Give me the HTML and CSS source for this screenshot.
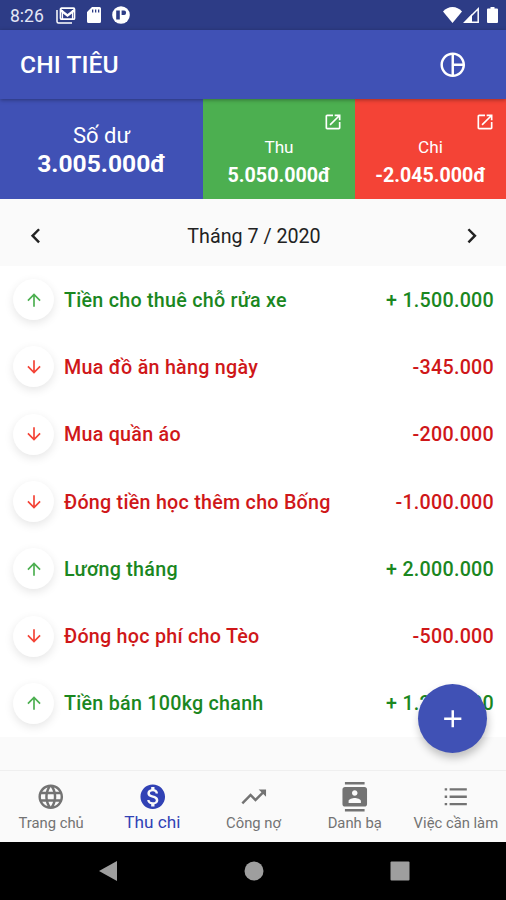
FILE: index.html
```html
<!DOCTYPE html>
<html lang="vi">
<head>
<meta charset="utf-8">
<title>Chi tiêu</title>
<link rel="stylesheet" href="styles.css">
</head>
<body>
<svg class="defs" width="0" height="0">
  <symbol id="up" viewBox="0 0 24 24"><path d="M4 12l1.41 1.41L11 7.83V20h2V7.83l5.58 5.59L20 12l-8-8-8 8z"/></symbol>
  <symbol id="down" viewBox="0 0 24 24"><path d="M20 12l-1.41-1.41L13 16.17V4h-2v12.17l-5.58-5.59L4 12l8 8 8-8z"/></symbol>
  <symbol id="open" viewBox="0 0 24 24"><path d="M19 19H5V5h7V3H5c-1.11 0-2 .9-2 2v14c0 1.1.89 2 2 2h14c1.1 0 2-.9 2-2v-7h-2v7zM14 3v2h3.59l-9.83 9.83 1.41 1.41L19 6.41V10h2V3h-7z"/></symbol>
</svg>
<div class="screen">
  <header class="status">
    <span class="clock">8:26</span>
    <svg class="s-mail" viewBox="0 0 20 17"><path d="M1 3v11.5Q1 16 2.500 16H16" fill="none" stroke="#fff" stroke-width="1.500"/><rect x="4.500" y="1.200" width="14" height="11" rx="1" fill="none" stroke="#fff" stroke-width="1.700"/><path d="M5 2l6.500 5L18 2v3l-6.500 5L5 5z"/><path d="M6.500 3v9M16.500 3v9" stroke="#fff" stroke-width="1.200"/></svg>
    <svg class="s-sd" viewBox="0 0 14 16"><path fill-rule="evenodd" d="M5 0h7.500Q14 0 14 1.500v13q0 1.500-1.500 1.500h-11Q0 16 0 14.500V5zM5 2.500v3h1.300v-3zM8 2.500v3h1.300v-3zM11 2.500v3h1.300v-3z"/></svg>
    <svg class="s-app" viewBox="0 0 18 18"><circle cx="9" cy="9" r="8.800"/><path d="M4.200 4.500h3.600v9H4.200zM9.600 4.500h2.500q2 0 2 2.300t-2 2.300H9.600z" fill="#2d3c86"/></svg>
    <span class="grow"></span>
    <svg class="s-wifi" viewBox="0 0 19 16"><path d="M9.500 16L0 4.500Q4 0 9.500 0T19 4.500z"/></svg>
    <svg class="s-signal" viewBox="0 0 16 16"><path d="M1.800 15.200L15.200 1.800V15.200z" fill="none" stroke="#fff" stroke-width="1.500"/><path d="M1 15.500L9 7v8.500z"/></svg>
    <svg class="s-battery" viewBox="0 0 11 16"><path d="M3.500 0h4v1.500H10q1 0 1 1V15q0 1-1 1H1q-1 0-1-1V2.500q0-1 1-1h2.500z"/></svg>
  </header>
  <div class="appbar">
    <h1>CHI TIÊU</h1>
    <svg class="icon" viewBox="0 0 24 24"><path d="M12 2C6.480 2 2 6.480 2 12s4.480 10 10 10 10-4.480 10-10S17.520 2 12 2zm1 2.070c3.610.45 6.480 3.330 6.930 6.930H13V4.070zM4 12c0-4.060 3.070-7.440 7-7.930v15.870c-3.930-.5-7-3.880-7-7.940zm9 7.930V13h6.930c-.45 3.610-3.320 6.480-6.930 6.930z"/></svg>
  </div>
  <section class="summary">
    <div class="tile balance"><span>Số dư</span><b>3.005.000đ</b></div>
    <div class="tile income"><svg><use href="#open"/></svg><span>Thu</span><b>5.050.000đ</b></div>
    <div class="tile expense"><svg><use href="#open"/></svg><span>Chi</span><b>-2.045.000đ</b></div>
  </section>
  <div class="month">
    <svg class="icon" viewBox="0 0 24 24"><path d="M15.410 7.410L14 6l-6 6 6 6 1.410-1.410L10.830 12z"/></svg>
    <span>Tháng 7 / 2020</span>
    <svg class="icon" viewBox="0 0 24 24"><path d="M10 6L8.590 7.410 13.170 12l-4.580 4.590L10 18l6-6z"/></svg>
  </div>
  <main>
    <ul class="list">
      <li class="in"><i><svg><use href="#up"/></svg></i><span>Tiền cho thuê chỗ rửa xe</span><em>+ 1.500.000</em></li>
      <li class="out"><i><svg><use href="#down"/></svg></i><span>Mua đồ ăn hàng ngày</span><em>-345.000</em></li>
      <li class="out"><i><svg><use href="#down"/></svg></i><span>Mua quần áo</span><em>-200.000</em></li>
      <li class="out"><i><svg><use href="#down"/></svg></i><span>Đóng tiền học thêm cho Bống</span><em>-1.000.000</em></li>
      <li class="in"><i><svg><use href="#up"/></svg></i><span>Lương tháng</span><em>+ 2.000.000</em></li>
      <li class="out"><i><svg><use href="#down"/></svg></i><span>Đóng học phí cho Tèo</span><em>-500.000</em></li>
      <li class="in"><i><svg><use href="#up"/></svg></i><span>Tiền bán 100kg chanh</span><em>+ 1.200.000</em></li>
    </ul>
    <button class="fab" aria-label="Thêm"><svg class="icon" viewBox="0 0 24 24"><path d="M19 13h-6v6h-2v-6H5v-2h6V5h2v6h6v2z"/></svg></button>
  </main>
  <nav class="tabs">
    <a><svg class="icon" viewBox="0 0 24 24"><path d="M11.990 2C6.470 2 2 6.480 2 12s4.470 10 9.990 10C17.520 22 22 17.520 22 12S17.520 2 11.990 2zm6.930 6h-2.950c-.32-1.250-.78-2.450-1.380-3.560 1.840.63 3.370 1.910 4.330 3.560zM12 4.040c.83 1.200 1.480 2.530 1.910 3.960h-3.820c.43-1.430 1.080-2.760 1.910-3.960zM4.260 14C4.100 13.360 4 12.690 4 12s.1-1.360.26-2h3.380c-.08.66-.14 1.320-.14 2 0 .68.06 1.340.14 2H4.260zm.82 2h2.950c.32 1.250.78 2.450 1.380 3.560-1.840-.63-3.370-1.900-4.330-3.560zm2.950-8H5.080c.96-1.660 2.490-2.930 4.330-3.560C8.810 5.550 8.350 6.750 8.030 8zM12 19.960c-.83-1.200-1.480-2.530-1.910-3.960h3.820c-.43 1.430-1.080 2.760-1.910 3.960zM14.340 14H9.660c-.09-.66-.16-1.320-.16-2 0-.68.07-1.350.16-2h4.680c.09.65.16 1.320.16 2 0 .68-.07 1.340-.16 2zm.25 5.560c.6-1.110 1.060-2.310 1.380-3.560h2.950c-.96 1.650-2.490 2.930-4.330 3.560zM16.360 14c.08-.66.14-1.320.14-2 0-.68-.06-1.340-.14-2h3.380c.16.64.26 1.310.26 2s-.1 1.360-.26 2h-3.380z"/></svg><span>Trang chủ</span></a>
    <a class="active"><svg class="icon" viewBox="0 0 24 24"><path d="M12 2C6.480 2 2 6.480 2 12s4.480 10 10 10 10-4.480 10-10S17.520 2 12 2zm1.410 16.090V20h-2.670v-1.930c-1.710-.36-3.160-1.460-3.270-3.400h1.960c.1 1.050.82 1.870 2.650 1.870 1.960 0 2.400-.98 2.400-1.590 0-.83-.44-1.610-2.670-2.140-2.480-.6-4.180-1.620-4.180-3.670 0-1.720 1.390-2.840 3.110-3.210V4h2.670v1.950c1.860.45 2.790 1.860 2.850 3.390H14.300c-.05-1.110-.64-1.870-2.220-1.870-1.500 0-2.400.68-2.400 1.640 0 .84.65 1.390 2.670 1.910s4.180 1.390 4.180 3.910c-.01 1.830-1.380 2.830-3.120 3.160z"/></svg><span>Thu chi</span></a>
    <a><svg class="icon" viewBox="0 0 24 24"><path d="M16 6l2.290 2.290-4.880 4.880-4-4L2 16.590 3.410 18l6-6 4 4 6.300-6.290L22 12V6z"/></svg><span>Công nợ</span></a>
    <a><svg class="icon" viewBox="0 0 24 24"><path d="M21.500 0H2.500v0H4v2h16V0zM4 24h16v-2H4v2zM20 4H4c-1.100 0-2 .9-2 2v12c0 1.100.9 2 2 2h16c1.100 0 2-.9 2-2V6c0-1.100-.9-2-2-2zm-8 2.750c1.240 0 2.250 1.010 2.250 2.250s-1.010 2.250-2.250 2.250S9.750 10.240 9.750 9 10.760 6.750 12 6.750zM17 17H7v-1.500c0-1.670 3.330-2.500 5-2.500s5 .83 5 2.500V17z"/></svg><span>Danh bạ</span></a>
    <a><svg class="icon" viewBox="0 0 24 24"><path d="M3 5h2v2H3zM3 11h2v2H3zM3 17h2v2H3zM7 5h14v2H7zM7 11h14v2H7zM7 17h14v2H7z"/></svg><span>Việc cần làm</span></a>
  </nav>
  <footer class="system">
    <svg viewBox="0 0 20 20"><path d="M1 10L19 0v20z"/></svg>
    <svg viewBox="0 0 20 20"><circle cx="10" cy="10" r="9.500"/></svg>
    <svg viewBox="0 0 20 20"><rect x=".5" y=".5" width="19" height="19" rx="1"/></svg>
  </footer>
</div>
</body>
</html>
```
FILE: styles.css
```css
* { box-sizing: border-box; }
body { margin: 0; font-family: Roboto, "Liberation Sans", sans-serif; background: #000; }
svg { display: block; fill: currentColor; flex: none; }
.defs { position: absolute; }
.screen { width: 506px; height: 900px; display: flex; flex-direction: column; overflow: hidden; background: #fafafa; }
.icon { width: 29.500px; height: 29.500px; }
.grow { flex: 1; }

.status { height: 30px; background: #2d3c86; color: #fff; display: flex; align-items: center; padding: 0 8px 0 10px; }
.clock { font-size: 17.500px; width: 46px; padding-top: 2px; color: #e4e7f5; }
.s-mail { width: 20px; height: 17px; }
.s-sd { width: 14px; height: 16px; margin-left: 11px; }
.s-app { width: 18px; height: 18px; margin-left: 11px; }
.s-wifi { width: 19px; height: 16px; }
.s-signal { width: 16px; height: 16px; margin-left: 1px; }
.s-battery { width: 11px; height: 16px; margin-left: 8px; }

.appbar { height: 69px; background: #4051b5; color: #fff; display: flex; align-items: center; justify-content: space-between; padding: 0 39px 0 20px; box-shadow: 0 1px 4px rgba(0,0,0,.35); position: relative; }
h1 { margin: 0; font-size: 24.600px; font-weight: 500; letter-spacing: .1px; }

.summary { height: 100px; display: grid; grid-template-columns: 203px 152px 151px; color: #fff; }
.tile { display: flex; flex-direction: column; align-items: center; }
.tile b { font-weight: 700; }
.balance { background: #4051b5; padding-top: 23px; }
.balance span { font-size: 22px; line-height: 27px; }
.balance b { font-size: 24.600px; line-height: 29px; }
.income { background: #4caf50; }
.expense { background: #f44336; }
.tile svg { width: 20px; height: 20px; align-self: flex-end; margin: 13px 12px 0 0; }
.expense svg { margin-right: 11px; }
.tile svg + span { font-size: 17.200px; line-height: 20px; margin-top: 5px; }
.tile svg + span + b { font-size: 19.700px; line-height: 24px; margin-top: 7px; }

.month { height: 67px; display: flex; align-items: center; justify-content: space-between; padding: 7px 19px 0 21px; color: #222; font-size: 19.700px; }
.month span { padding-top: 1px; }

main { flex: 1; position: relative; }
.list { list-style: none; margin: 0; padding: 0; background: #fff; }
.list li { height: 67.300px; display: flex; align-items: center; padding: 0 12px 0 13px; font-size: 19.700px; font-weight: 500; letter-spacing: .26px; }
.list i { width: 41px; height: 41px; border-radius: 50%; background: #fff; box-shadow: 0 3px 10px rgba(0,0,0,.1); display: flex; align-items: center; justify-content: center; margin-right: 10px; }
.list i svg { width: 20px; height: 20px; }
.list span, .list em { padding-top: 1px; }
.list em { font-style: normal; margin-left: auto; }
.in { color: #1b871f; }
.out { color: #cf1719; }
.in i { color: #4caf50; }
.out i { color: #f44336; }
.fab { position: absolute; right: 19px; top: 418px; width: 69px; height: 69px; padding: 0; border: 0; border-radius: 50%; background: #4051b5; color: #fff; display: flex; align-items: center; justify-content: center; box-shadow: 1px 5px 9px rgba(0,0,0,.24); }

.tabs { height: 72px; border-top: 1px solid #efefef; display: grid; grid-template-columns: repeat(5, 1fr); color: #737373; background: #fafafa; }
.tabs a { display: flex; flex-direction: column; align-items: center; padding: 11px 0 0 1px; white-space: nowrap; }
.tabs span { font-size: 14.800px; line-height: 20px; margin-top: 1px; }
.tabs .active { color: #3142b5; }
.tabs .active span { font-size: 17.200px; margin-top: 0; }

.system { height: 58px; background: #000; color: #9e9e9e; display: flex; justify-content: center; gap: 126px; align-items: center; padding-left: 1px; }
.system svg { width: 20px; height: 20px; }
```
